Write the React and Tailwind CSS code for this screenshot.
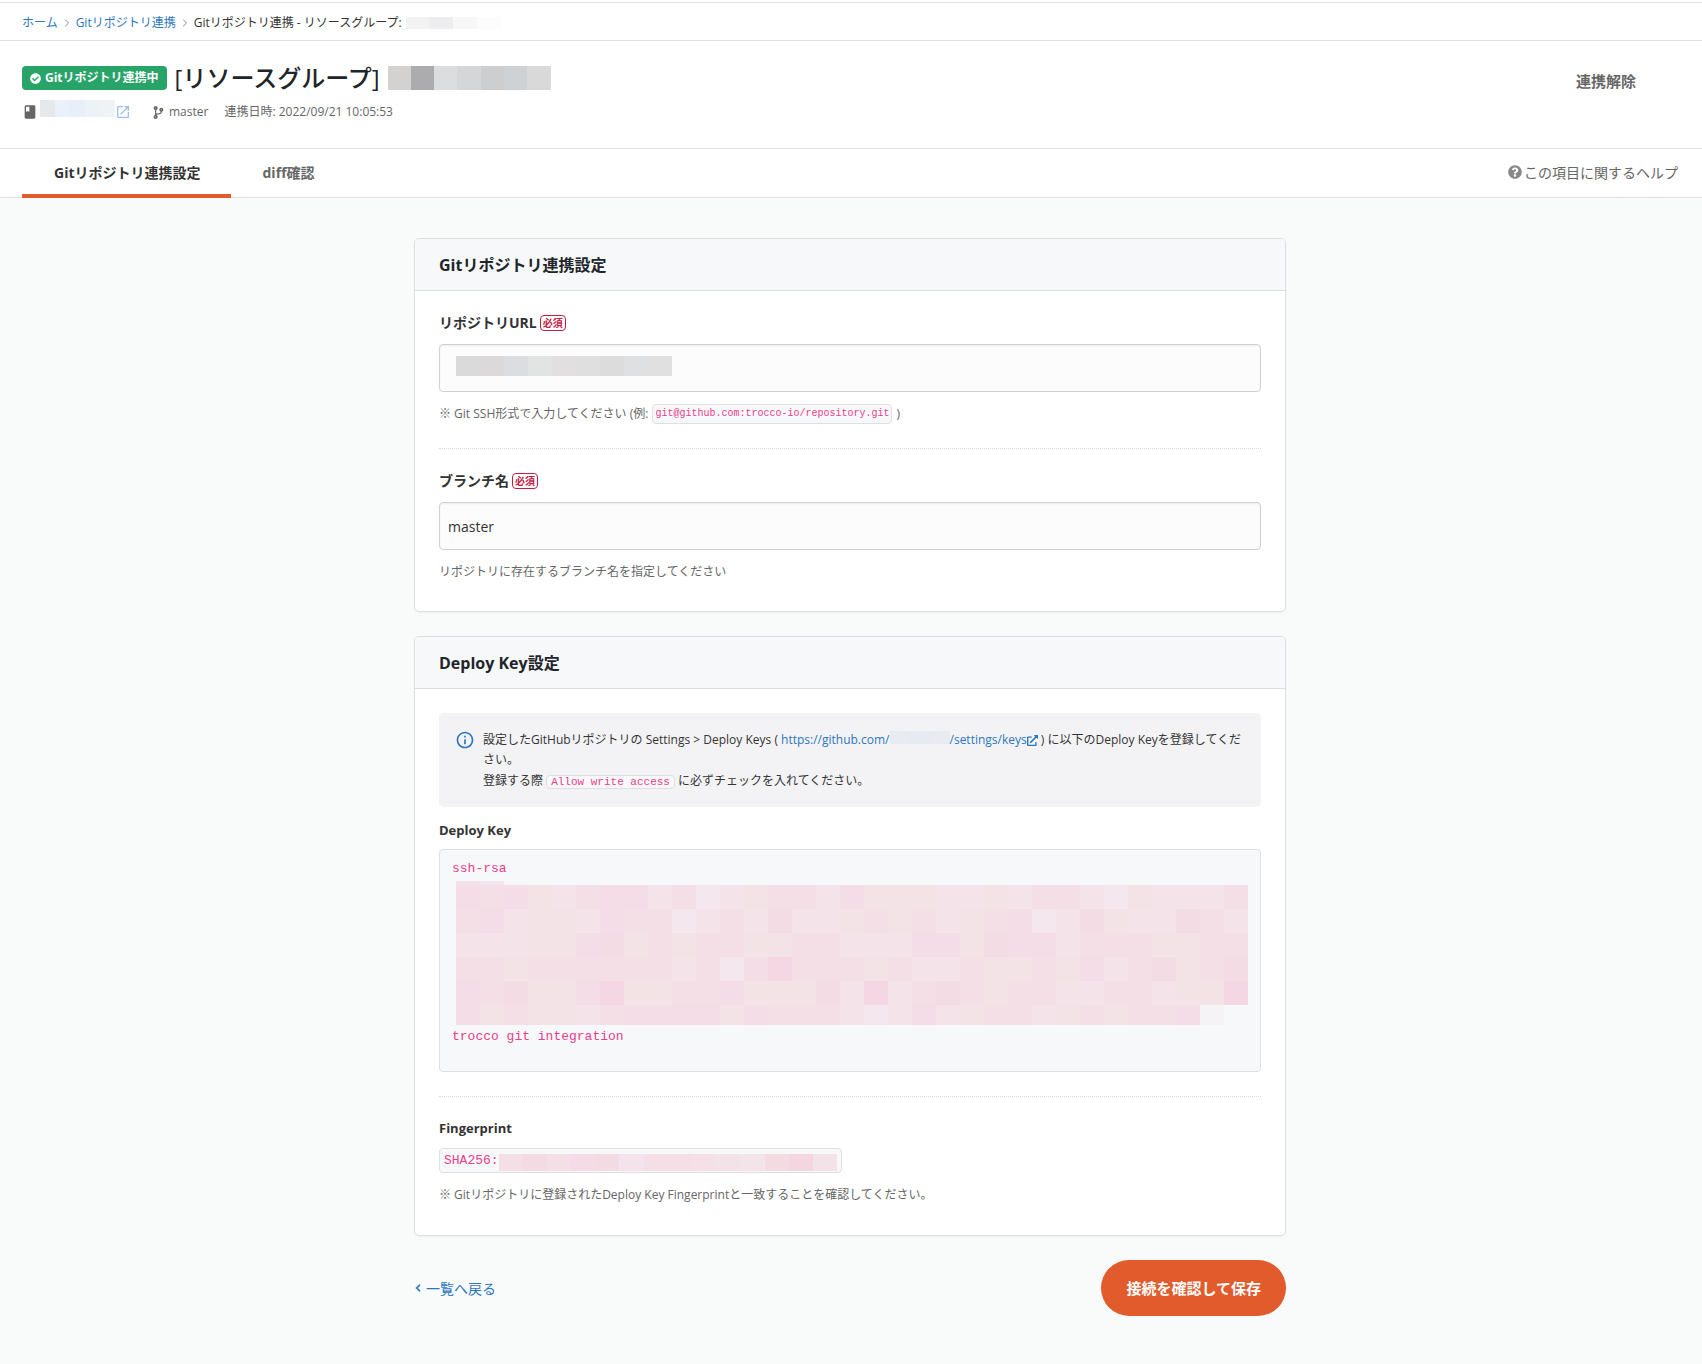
import React from 'react';
import { FaCheckCircle, FaChevronLeft, FaCodeBranch, FaExternalLinkAlt, FaQuestionCircle } from 'react-icons/fa';
import { MdBook, MdInfoOutline, MdOpenInNew } from 'react-icons/md';
import { ChevronRight } from 'lucide-react';

// One letter per cell, light to dark
const TONES = {
  a: '#f6f8fa',
  b: '#f6f3f6',
  c: '#f4e7ed',
  d: '#f4e4ea',
  e: '#f3e2e6',
  f: '#f4dfe7',
  g: '#f4dde6',
  h: '#f3dce3',
  i: '#f4d7e2',
};

const KEY_ROWS = [
  'gfgedfggdfcdeffdgeeeddedffdcedddf',
  'fgdeedgffcdfdhddefefdefgcdheddhfd',
  'dddeeghefeffeeffdddggehggdfffeeff',
  'ffeffffffdfcgifffefddfeefegdfhefh',
  'gfheegieeffgeeehdidfhfeffddffdeei',
  'gefeedfggggegfffdcdgdeffdefeffgba',
];

const Mosaic = ({ colors, className }) => (
  <span className={`flex ${className}`} aria-hidden="true">
    {colors.map((color, i) => (
      <span key={i} className="flex-1" style={{ backgroundColor: color }} />
    ))}
  </span>
);

const Required = () => (
  <span className="rounded-[4px] border border-[#c31d45] px-[2px] text-[10px] leading-[14px] font-bold text-[#c31d45]">
    必須
  </span>
);

const Code = ({ children, className }) => (
  <code
    className={`rounded-[4px] border border-[#dfdfdf] bg-[#f7f8fa] font-['Liberation_Mono',monospace] text-[#e83e8c] ${className}`}
  >
    {children}
  </code>
);

const Card = ({ title, children }) => (
  <section className="mb-6 overflow-hidden rounded-[5px] border border-[#dcdfdf] bg-white shadow-[0_1px_2px_rgba(0,0,0,0.04)]">
    <h2 className="flex h-[52px] items-center border-b border-[#dcdfdf] bg-[#f7f8fa] px-6 text-[16px] font-bold text-[#212529]">
      {title}
    </h2>
    <div className="p-6">{children}</div>
  </section>
);

const inputClass =
  'block h-12 w-full rounded-[4px] border border-[#ced0d6] bg-[#fcfcfc] px-2 text-[14px] text-[#333] shadow-[inset_0_1px_2px_rgba(0,0,0,0.06)] outline-none';

const labelClass = 'flex h-4 items-center gap-[3px] text-[14px] leading-4 font-bold text-[#333]';

const Separator = () => <ChevronRight size={12} className="mx-[3px] text-[#888]" />;

const Breadcrumb = () => (
  <nav className="flex h-[38px] items-center border-b border-[#dfdfdf] px-[22px] pt-[2px] text-[12px]">
    <a href="#home" className="text-[#2d77bd]">ホーム</a>
    <Separator />
    <a href="#git" className="text-[#2d77bd]">Gitリポジトリ連携</a>
    <Separator />
    <span>Gitリポジトリ連携 - リソースグループ:</span>
    <Mosaic className="ml-1 h-3 w-[95px]" colors={['#f2f2f3', '#ededef', '#f7f7f8', '#fcfcfc']} />
  </nav>
);

const Header = () => (
  <header className="flex h-[108px] items-start justify-between border-b border-[#dfdfdf] px-[22px] pt-6">
    <div>
      <div className="flex h-[26px] items-center">
        <span className="flex h-6 items-center gap-1 rounded-[4px] bg-[#28a468] px-2 text-[12px] font-bold text-white">
          <FaCheckCircle size={11} />
          Gitリポジトリ連携中
        </span>
        <h1 className="ml-2 text-[24px] leading-6 font-medium text-[#212529]">[リソースグループ]</h1>
        <Mosaic
          className="ml-2 h-6 w-[163px]"
          colors={['#d3d2d1', '#acacae', '#dcdddf', '#d5d6d8', '#cdced0', '#ced2d5', '#d9d9d9']}
        />
      </div>
      <div className="mt-[13px] flex h-4 items-center text-[12px] text-[#666]">
        <MdBook size={16} />
        <Mosaic className="mb-2 ml-[2px] h-[17px] w-[75px]" colors={['#e6e8ec', '#ebf1fa', '#e9eff8', '#ecf2f6', '#eef3f6']} />
        <a href="#repo" aria-label="リポジトリを開く" className="text-[#9cc1e4]">
          <MdOpenInNew size={16} />
        </a>
        <FaCodeBranch size={13} className="mr-1 ml-[21px]" />
        <span>master</span>
        <span className="ml-4">連携日時: 2022/09/21 10:05:53</span>
      </div>
    </div>
    <button type="button" className="mr-[44px] pt-1 text-[15px] leading-6 font-bold text-[#666]">
      連携解除
    </button>
  </header>
);

const Tabs = () => (
  <div className="flex h-[49px] items-stretch justify-between border-b border-[#dfdfdf] pr-6 pl-[22px]">
    <div className="-mb-px flex text-[14px] font-bold">
      <a href="#settings" className="flex items-center border-b-4 border-[#e15b2d] pt-[2px] pr-[30px] pl-8 text-[#333]">
        Gitリポジトリ連携設定
      </a>
      <a href="#diff" className="flex items-center px-8 pb-[2px] text-[#666]">diff確認</a>
    </div>
    <a href="#help" className="flex items-center gap-[2px] pb-[2px] text-[14px] text-[#666]">
      <FaQuestionCircle size={14} className="text-[#888]" />
      この項目に関するヘルプ
    </a>
  </div>
);

export default function App() {
  return (
    <div className="min-h-screen bg-[#f9fbfa] font-['Open_Sans','Noto_Sans_CJK_JP',sans-serif] text-[#333]">
      <div className="bg-white pt-[2px]">
        <div className="border-t border-[#dfdfdf]">
          <Breadcrumb />
          <Header />
          <Tabs />
        </div>
      </div>

      <div className="pr-[2px]">
        <main className="mx-auto w-full max-w-[872px] pt-10 pb-12">
          <Card title="Gitリポジトリ連携設定">
            <div className="border-b border-dotted border-[#dcdcdc] pb-6">
              <label htmlFor="repository-url" className={labelClass}>
                リポジトリURL <Required />
              </label>
              <div className="relative mt-[13px]">
                <input id="repository-url" type="text" readOnly className={inputClass} />
                <Mosaic
                  className="absolute top-3 left-[17px] h-5 w-[216px]"
                  colors={['#dadada', '#dbd9da', '#dcdde0', '#e1e4e3', '#e2dfe1', '#dfdfdf', '#dcdcdc', '#dfe0e2', '#e0e0e0']}
                />
              </div>
              <p className="mt-3 flex h-5 items-center gap-1 text-[12px] text-[#666]">
                <span>※ Git SSH形式で入力してください (例:</span>
                <Code className="px-[2px] text-[10px] leading-[18px]">git@github.com:trocco-io/repository.git</Code>
                <span>)</span>
              </p>
            </div>
            <div className="pt-6">
              <label htmlFor="branch" className={labelClass}>
                ブランチ名 <Required />
              </label>
              <input id="branch" type="text" defaultValue="master" className={`mt-[13px] ${inputClass}`} />
              <p className="mt-3 mb-[5px] text-[12px] leading-5 text-[#666]">
                リポジトリに存在するブランチ名を指定してください
              </p>
            </div>
          </Card>

          <Card title="Deploy Key設定">
            <div className="flex gap-2 rounded-[5px] bg-[#f3f3f6] pt-[17px] pr-1 pb-[15px] pl-4">
              <MdInfoOutline size={20} className="shrink-0 text-[#2d77bd]" />
              <div className="text-[12px] leading-5">
                <p>
                  設定したGitHubリポジトリの Settings &gt; Deploy Keys ({' '}
                  <a href="#keys" className="text-[#2d77bd]">
                    https://github.com/
                    <Mosaic className="inline-flex h-[13px] w-[60px]" colors={['#e8ecf2', '#e6eaf2', '#e8ecf2']} />
                    /settings/keys
                    <FaExternalLinkAlt size={11} className="inline" />
                  </a>{' '}
                  ) に以下のDeploy Keyを登録してくだ
                  <br />
                  さい。
                </p>
                <p className="mt-px">
                  登録する際 <Code className="px-1 text-[11px]">Allow write access</Code> に必ずチェックを入れてください。
                </p>
              </div>
            </div>

            <div className="border-b border-dotted border-[#dcdcdc] pb-6">
              <h3 className="mt-[15px] text-[13px] leading-4 font-bold">Deploy Key</h3>
              <div className="mt-[11px] rounded-[4px] border border-[#dfdfdf] bg-[#f7f8fa] px-3 pt-[9px] pb-6 font-['Liberation_Mono',monospace] text-[13px] leading-5 text-[#e83e8c]">
                <p>ssh-rsa</p>
                <div className="mt-[2px] ml-1 pb-[2px]" aria-hidden="true">
                  <Mosaic className="h-1 w-[72px]" colors={['#f4e2ea', '#f4e6ec', '#f6f6f8']} />
                  {KEY_ROWS.map((row, i) => (
                    <Mosaic key={i} className="h-6 last:h-5" colors={row.split('').map((tone) => TONES[tone])} />
                  ))}
                </div>
                <p>trocco git integration</p>
              </div>
            </div>

            <div className="pt-[23px]">
              <h3 className="text-[13px] leading-4 font-bold">Fingerprint</h3>
              <code className="mt-3 flex h-[25px] w-[403px] max-w-full items-center rounded-[4px] border border-[#dfdfdf] bg-[#f7f8fa] px-1 font-['Liberation_Mono',monospace] text-[13px] text-[#e83e8c]">
                SHA256:
                <Mosaic
                  className="mt-1 h-[17px] flex-1"
                  colors={['#f4dfe7', '#f3dbe4', '#f4dfe7', '#f3dce5', '#f3dbe4', '#f4e3ea', '#f4dfe7', '#f4dfe6', '#f4e0e6', '#f3e2e8', '#f3e4ea', '#f4dbe2', '#f4d6e0', '#f4e2e9']}
                />
              </code>
              <p className="mt-3 mb-[6px] text-[12px] leading-5 text-[#666]">
                ※ Gitリポジトリに登録されたDeploy Key Fingerprintと一致することを確認してください。
              </p>
            </div>
          </Card>

          <div className="flex items-center justify-between">
            <a href="#list" className="flex items-center gap-1 text-[14px] text-[#2d77bd]">
              <FaChevronLeft size={8} stroke="currentColor" strokeWidth={40} />
              一覧へ戻る
            </a>
            <button type="button" className="h-14 rounded-full bg-[#e15b2d] px-[25px] text-[15px] font-bold text-white">
              接続を確認して保存
            </button>
          </div>
        </main>
      </div>
    </div>
  );
}
